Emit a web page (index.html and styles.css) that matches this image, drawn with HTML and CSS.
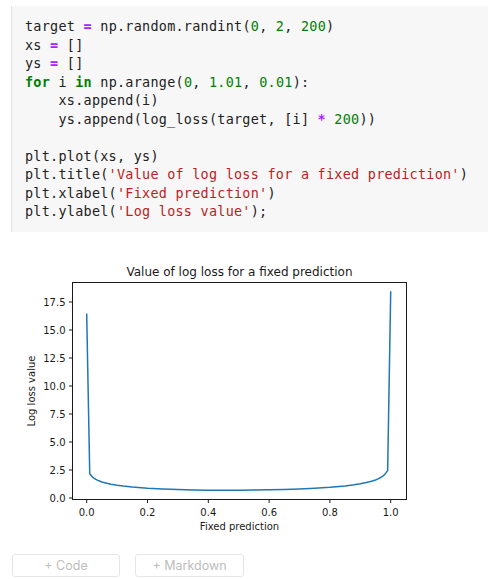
FILE: index.html
```html
<!DOCTYPE html>
<html>
<head>
<meta charset="utf-8">
<link rel="stylesheet" href="styles.css">
</head>
<body>
<div class="cell">
<pre class="code"><span>target <b class="op">=</b> np.random.randint(<i class="n">0</i>, <i class="n">2</i>, <i class="n">200</i>)</span>
<span>xs <b class="op">=</b> []</span>
<span>ys <b class="op">=</b> []</span>
<span><b class="kw">for</b> i <b class="kw">in</b> np.arange(<i class="n">0</i>, <i class="n">1.01</i>, <i class="n">0.01</i>):</span>
<span>    xs.append(i)</span>
<span>    ys.append(log_loss(target, [i] <b class="op">*</b> <i class="n">200</i>))</span>
<span></span>
<span>plt.plot(xs, ys)</span>
<span>plt.title(<i class="s">'Value of log loss for a fixed prediction'</i>)</span>
<span>plt.xlabel(<i class="s">'Fixed prediction'</i>)</span>
<span>plt.ylabel(<i class="s">'Log loss value'</i>);</span></pre>
</div>
<div class="output">
<svg class="figure" width="430" height="290" viewBox="0 250 430 290" xmlns="http://www.w3.org/2000/svg">
  <rect x="0" y="250" width="430" height="290" fill="#fff"/>
  <text class="title" x="239.5" y="275.5" text-anchor="middle">Value of log loss for a fixed prediction</text>
  <g transform="translate(86.7 498) scale(304 -11.2)">
    <path fill="none" stroke="#1f77b4" stroke-width="1.5" vector-effect="non-scaling-stroke" stroke-linejoin="round" stroke-linecap="square"
      d="M0 16.4 L0.01 2.17 L0.02 1.849 L0.03 1.664 L0.04 1.535 L0.05 1.435 L0.06 1.355 L0.07 1.288 L0.08 1.231 L0.1 1.138 L0.12 1.064 L0.15 0.978 L0.2 0.875 L0.25 0.804 L0.3 0.755 L0.35 0.722 L0.4 0.701 L0.45 0.692 L0.5 0.693 L0.55 0.704 L0.6 0.726 L0.65 0.759 L0.7 0.806 L0.75 0.870 L0.8 0.958 L0.85 1.082 L0.88 1.184 L0.9 1.270 L0.92 1.378 L0.93 1.443 L0.94 1.520 L0.95 1.612 L0.96 1.725 L0.97 1.873 L0.98 2.083 L0.99 2.446 L1 18.4"/>
  </g>
  <rect x="72.5" y="282.5" width="334" height="217" fill="none" stroke="#1a1a1a" stroke-width="1"/>
  <g stroke="#1a1a1a" stroke-width="1">
    <line x1="69" y1="498" x2="72.5" y2="498"/>
    <line x1="69" y1="470" x2="72.5" y2="470"/>
    <line x1="69" y1="442" x2="72.5" y2="442"/>
    <line x1="69" y1="414" x2="72.5" y2="414"/>
    <line x1="69" y1="386" x2="72.5" y2="386"/>
    <line x1="69" y1="358" x2="72.5" y2="358"/>
    <line x1="69" y1="330" x2="72.5" y2="330"/>
    <line x1="69" y1="302" x2="72.5" y2="302"/>
    <line x1="86.7" y1="499.5" x2="86.7" y2="503"/>
    <line x1="147.5" y1="499.5" x2="147.5" y2="503"/>
    <line x1="208.3" y1="499.5" x2="208.3" y2="503"/>
    <line x1="269.1" y1="499.5" x2="269.1" y2="503"/>
    <line x1="329.9" y1="499.5" x2="329.9" y2="503"/>
    <line x1="390.7" y1="499.5" x2="390.7" y2="503"/>
  </g>
  <g class="tick" text-anchor="end">
    <text x="65.5" y="501.6">0.0</text>
    <text x="65.5" y="473.6">2.5</text>
    <text x="65.5" y="445.6">5.0</text>
    <text x="65.5" y="417.6">7.5</text>
    <text x="65.5" y="389.6">10.0</text>
    <text x="65.5" y="361.6">12.5</text>
    <text x="65.5" y="333.6">15.0</text>
    <text x="65.5" y="305.6">17.5</text>
  </g>
  <g class="tick" text-anchor="middle">
    <text x="86.7" y="515.5">0.0</text>
    <text x="147.5" y="515.5">0.2</text>
    <text x="208.3" y="515.5">0.4</text>
    <text x="269.1" y="515.5">0.6</text>
    <text x="329.9" y="515.5">0.8</text>
    <text x="390.7" y="515.5">1.0</text>
  </g>
  <text class="label" x="239.5" y="529.5" text-anchor="middle">Fixed prediction</text>
  <text class="label" x="35" y="391" text-anchor="middle" transform="rotate(-90 35 391)">Log loss value</text>
</svg>
</div>
<div class="actions">
  <button class="add">+ Code</button>
  <button class="add">+ Markdown</button>
</div>
</body>
</html>
```
FILE: styles.css
```css
html, body {
  margin: 0;
  padding: 0;
  background: #fff;
  overflow: hidden;
}
body {
  width: 488px;
  height: 579px;
}
.cell {
  margin: 6px 0 0 11px;
  background: #f7f7f7;
  border-left: 1px solid #e2e2e2;
  height: 226px;
  box-sizing: border-box;
  padding: 12px 0 0 13px;
}
.code {
  margin: 0;
  font-family: "DejaVu Sans Mono", "Liberation Mono", monospace;
  font-size: 13.45px;
  letter-spacing: 0.27px;
  line-height: 18.5px;
  color: #212121;
  white-space: pre;
}
.code b, .code i {
  font-style: normal;
}
.code .op {
  color: #aa22ff;
  font-weight: bold;
}
.code .kw {
  color: #008000;
  font-weight: bold;
}
.code .n {
  color: #008000;
}
.code .s {
  color: #ba2121;
}
.output {
  margin-top: 18px;
  height: 290px;
}
.figure {
  display: block;
}
.figure text {
  font-family: "DejaVu Sans", sans-serif;
  fill: #1a1a1a;
}
.figure .title {
  font-size: 12px;
}
.figure .tick text {
  font-size: 10px;
}
.figure .label {
  font-size: 10px;
}
.actions {
  display: flex;
  gap: 15px;
  margin: 14px 0 0 12px;
}
.add {
  height: 23px;
  width: 109px;
  background: #fff;
  border: 1px solid #e6e6e6;
  border-radius: 3px;
  color: #bdbdbd;
  font-family: Inter, "Noto Sans", sans-serif;
  font-size: 12.5px;
  padding: 0;
}
.add:first-child {
  width: 108px;
}
```
